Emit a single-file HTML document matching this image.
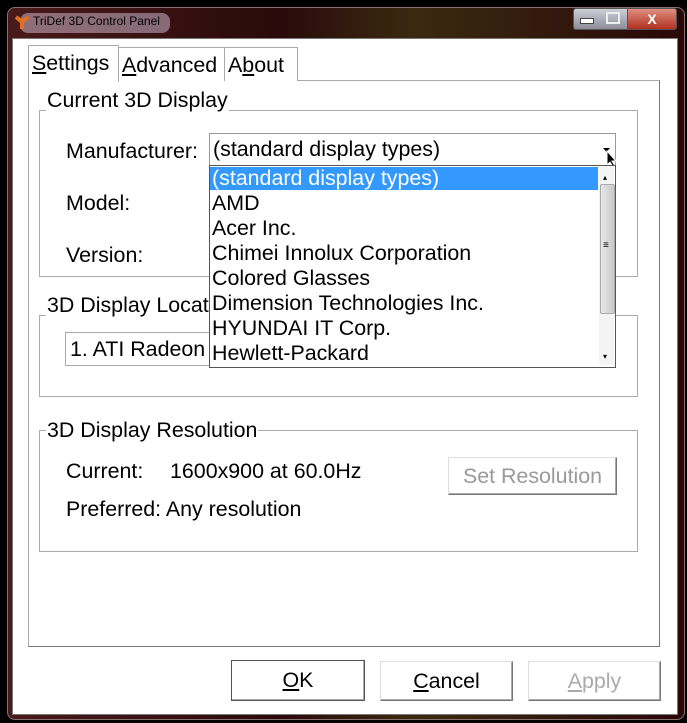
<!DOCTYPE html>
<html><head><style>
body{margin:0;width:687px;height:723px;background:#000;position:relative;overflow:hidden;font-family:"Liberation Sans",sans-serif;font-size:21.4px;color:#000}
.a{position:absolute}
.frame{left:7px;top:7px;width:676px;height:711px;border-radius:8px;background:linear-gradient(90deg,#4a1a1a,#2a0a0a 40%,#3a2a10 60%,#2a0808);border:1px solid #8a7070}
.client{left:12px;top:38px;width:664px;height:675px;background:#fff;border:1px solid #777}
.grp{border:1px solid #aaa;}
.lbl{background:#fff;padding:0 1px;line-height:22px}
.btn{border:1px solid #777;border-top-color:#ddd;border-left-color:#ddd;background:#fff;text-align:center;box-shadow:inset -1px -1px #aaa}
.tab{top:47px;height:33px;border:1px solid #aaa;border-bottom:none;background:#fff;line-height:34px;padding:0 3px}
.item{left:212px;height:25px;line-height:25px}
</style></head><body>
<div class="a frame"></div>
<div class="a" style="left:20px;top:13px;width:150px;height:20px;border-radius:8px;background:rgba(200,180,200,.55)"></div>
<svg class="a" style="left:14px;top:14px" width="16" height="16"><path d="M2 3 L8 8 L14 3 M8 8 L8 15" stroke="#e07020" stroke-width="4" fill="none"/></svg>
<div class="a" style="left:33px;top:14px;font-size:12px;color:#000">TriDef 3D Control Panel</div>
<div class="a" style="left:573px;top:8px;width:54px;height:20px;background:linear-gradient(#cfcfd8,#8c8c9a);border:1px solid #555;border-radius:3px 0 0 3px"></div>
<div class="a" style="left:580px;top:18px;width:12px;height:4px;background:#fff;border:1px solid #444"></div>
<div class="a" style="left:606px;top:12px;width:10px;height:8px;border:2px solid #eee"></div>
<div class="a" style="left:627px;top:8px;width:48px;height:20px;background:linear-gradient(#e09080,#b03020);border:1px solid #555;border-radius:0 3px 3px 0;color:#fff;text-align:center;font-weight:bold;font-size:14px;line-height:20px">X</div>
<div class="a client"></div>
<div class="a" style="left:28px;top:80px;width:630px;height:565px;border:1px solid #aaa;border-right-color:#777;border-bottom-color:#777"></div>
<div class="a tab" style="left:28px;top:45px;height:36px;width:83px;z-index:2"><u>S</u>ettings</div>
<div class="a tab" style="left:118px;width:99px"><u>A</u>dvanced</div>
<div class="a tab" style="left:224px;width:66px">A<u>b</u>out</div>
<div class="a grp" style="left:39px;top:110px;width:597px;height:165px"></div>
<div class="a lbl" style="left:46px;top:89px">Current 3D Display</div>
<div class="a" style="left:66px;top:139px">Manufacturer:</div>
<div class="a" style="left:66px;top:191px">Model:</div>
<div class="a" style="left:66px;top:243px">Version:</div>
<div class="a grp" style="left:39px;top:315px;width:597px;height:80px"></div>
<div class="a lbl" style="left:46px;top:294px">3D Display Locat</div>
<div class="a" style="left:65px;top:332px;width:470px;height:32px;border:1px solid #aaa;border-right:none"></div>
<div class="a" style="left:70px;top:337px">1. ATI Radeon</div>
<div class="a" style="left:537px;top:365px;width:79px;height:1px;background:#777"></div>
<div class="a grp" style="left:39px;top:430px;width:597px;height:120px"></div>
<div class="a lbl" style="left:46px;top:419px">3D Display Resolution</div>
<div class="a" style="left:66px;top:459px">Current:</div>
<div class="a" style="left:170px;top:459px">1600x900 at 60.0Hz</div>
<div class="a" style="left:66px;top:497px">Preferred: Any resolution</div>
<div class="a btn" style="left:448px;top:457px;width:167px;height:36px;line-height:36px;color:#999">Set Resolution</div>
<div class="a" style="left:209px;top:133px;width:405px;height:31px;border:1px solid #999;background:#fff"></div>
<div class="a" style="left:213px;top:137px">(standard display types)</div>
<svg class="a" style="left:603px;top:148px" width="8" height="6"><path d="M0 0H7L3.5 4Z" fill="#000"/></svg>
<svg class="a" style="left:606px;top:150px" width="12" height="18"><path d="M1 1V15L4 12L7 17L9 16L6 11H10Z" fill="#000" stroke="#fff" stroke-width="1"/></svg>
<div class="a" style="left:209px;top:165px;width:405px;height:201px;border:1px solid #555;background:#fff"></div>
<div class="a" style="left:210px;top:167px;width:388px;height:23px;background:#3399ff"></div>
<div class="a item" style="top:166px;color:#fff">(standard display types)</div>
<div class="a item" style="top:191px">AMD</div>
<div class="a item" style="top:216px">Acer Inc.</div>
<div class="a item" style="top:241px">Chimei Innolux Corporation</div>
<div class="a item" style="top:266px">Colored Glasses</div>
<div class="a item" style="top:291px">Dimension Technologies Inc.</div>
<div class="a item" style="top:316px">HYUNDAI IT Corp.</div>
<div class="a item" style="top:341px">Hewlett-Packard</div>
<div class="a" style="left:599px;top:166px;width:15px;height:199px;background:#f4f4f4"></div>
<div class="a" style="left:600px;top:184px;width:13px;height:128px;background:linear-gradient(90deg,#e8e8e8,#c8c8c8);border:1px solid #aaa;border-radius:2px"></div>
<div class="a" style="left:603px;top:173px;font-size:8px">▴</div>
<div class="a" style="left:603px;top:352px;font-size:8px">▾</div>
<div class="a" style="left:603px;top:241px;font-size:10px;line-height:10px">≡</div>
<div class="a btn" style="left:231px;top:660px;width:132px;height:39px;line-height:39px;border:1px solid #555"><u>O</u>K</div>
<div class="a btn" style="left:380px;top:661px;width:131px;height:38px;line-height:38px"><u>C</u>ancel</div>
<div class="a btn" style="left:528px;top:661px;width:131px;height:38px;line-height:38px;color:#aaa"><u>A</u>pply</div>
</body></html>
